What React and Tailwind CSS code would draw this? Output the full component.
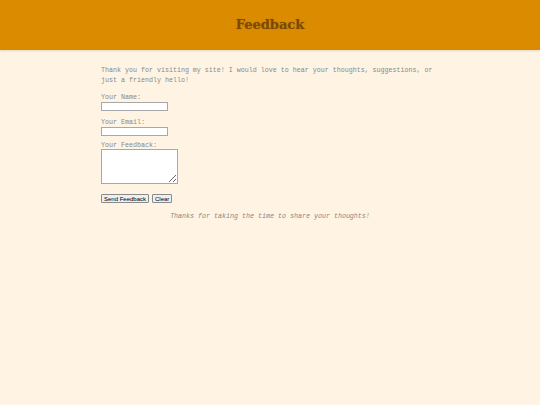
import React from 'react';

const App = () => {
  return (
    <div className="min-h-screen bg-[#fff4e3] font-['Liberation_Mono',monospace] text-[#888888]">
      {/* Header */}
      <header className="h-[50px] bg-[#db8b00] shadow-[0_1px_2px_rgba(0,0,0,0.12)] flex items-center justify-center">
        <h1 className="font-['DejaVu_Serif',serif] font-bold text-[13px] text-[#7a4a06] [text-shadow:0_0_1px_rgba(122,74,6,0.5)]">
          Feedback
        </h1>
      </header>

      <main className="w-[338px] mx-auto pt-[15px] text-[6.67px] leading-[10px]">
        <p>
          Thank you for visiting my site! I would love to hear your thoughts, suggestions, or just a friendly hello!
        </p>

        <form className="mt-[7px] flex flex-col" onSubmit={(e) => e.preventDefault()}>
          <label className="block">Your Name:</label>
          <input type="text" className="w-[67px] h-[9px] bg-white border border-[#a8a8a8] outline-none" />

          <label className="block mt-[6px]">Your Email:</label>
          <input type="email" className="w-[67px] h-[9px] bg-white border border-[#a8a8a8] outline-none" />

          <label className="block mt-[5px] leading-[8px]">Your Feedback:</label>
          <textarea className="w-[77px] h-[35px] bg-white border border-[#a8a8a8] outline-none resize" />

          <div className="flex gap-[3px] mt-[10px] font-['Liberation_Sans',sans-serif] text-[6px] text-black">
            <button type="button" className="h-[9px] px-[2px] leading-none bg-[#efefef] border border-[#8a8a8a] rounded-[1px]">
              Send Feedback
            </button>
            <button type="reset" className="h-[9px] px-[2px] leading-none bg-[#efefef] border border-[#8a8a8a] rounded-[1px]">
              Clear
            </button>
          </div>
        </form>

        <p className="mt-[8px] text-center italic">Thanks for taking the time to share your thoughts!</p>
      </main>
    </div>
  );
};

export default App;
